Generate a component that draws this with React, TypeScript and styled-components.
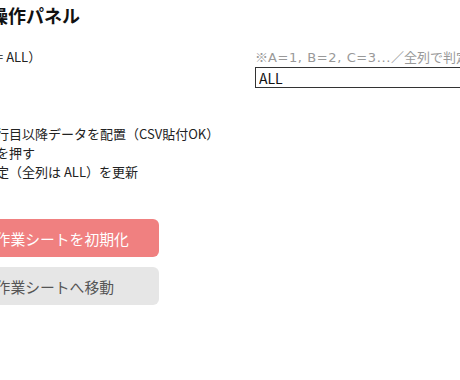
import React from 'react';
import styled, { createGlobalStyle } from 'styled-components';

const GlobalStyle = createGlobalStyle`
  html, body {
    margin: 0;
    padding: 0;
    background: #ffffff;
    overflow: hidden;
  }
  body {
    font-family: "Noto Sans CJK JP", "Noto Sans", sans-serif;
    color: #222222;
  }
`;

const steps = [
  '１．第２行目以降データを配置（CSV貼付OK）',
  '２．実行を押す',
  '３．列指定（全列は ALL）を更新',
];

const App = () => {
  return (
    <>
      <GlobalStyle />
      <Panel>
        <Title>操作パネル</Title>
        <FormRow>
          <Label>列（全列= ALL）</Label>
          <Field>
            <Hint>
              ※<Latin>A=1, B=2, C=3...</Latin>／全列で判定する場合は ALL
            </Hint>
            <TextInput defaultValue="ALL" />
          </Field>
        </FormRow>
        <StepList>
          {steps.map((s) => (
            <Step key={s}>{s}</Step>
          ))}
        </StepList>
        <ButtonGroup>
          <ActionButton $variant="danger">新規作業シートを初期化</ActionButton>
          <ActionButton $variant="neutral">既存作業シートへ移動</ActionButton>
        </ButtonGroup>
      </Panel>
    </>
  );
};

const Panel = styled.div`
  width: 640px;
  margin-left: -56px;
  display: flex;
  flex-direction: column;
`;

const Title = styled.h2`
  margin: 2px 0 0 46px;
  font-size: 18px;
  line-height: 26px;
  font-weight: 700;
  color: #111111;
`;

const FormRow = styled.div`
  display: grid;
  grid-template-columns: 311px 1fr;
  margin-top: 20px;
`;

const Label = styled.div`
  font-size: 13px;
  line-height: 18px;
`;

const Field = styled.div`
  display: flex;
  flex-direction: column;
`;

const Hint = styled.div`
  height: 18px;
  font-size: 13px;
  line-height: 18px;
  color: #999999;
  white-space: nowrap;
`;

const Latin = styled.span`
  font-family: "DejaVu Sans", sans-serif;
  line-height: 1;
  letter-spacing: 0.6px;
`;

const TextInput = styled.input`
  box-sizing: border-box;
  width: 320px;
  height: 21px;
  margin-top: 1px;
  padding: 0 3px;
  border: 1px solid #333333;
  border-radius: 0;
  font-family: inherit;
  font-size: 14px;
  color: #111111;
  outline: none;
`;

const StepList = styled.div`
  margin-top: 36px;
  display: flex;
  flex-direction: column;
`;

const Step = styled.div`
  font-size: 13px;
  line-height: 19px;
  white-space: nowrap;
`;

const ButtonGroup = styled.div`
  margin-top: 38px;
  display: flex;
  flex-direction: column;
  gap: 10px;
  width: 215px;
`;

const ActionButton = styled.button<{ $variant: 'danger' | 'neutral' }>`
  height: 38px;
  padding: 0 0 0 22px;
  border: none;
  border-radius: 6px;
  text-align: left;
  font-family: inherit;
  font-size: 14.8px;
  white-space: nowrap;
  background: ${(p) => (p.$variant === 'danger' ? '#f08080' : '#e6e6e6')};
  color: ${(p) => (p.$variant === 'danger' ? '#ffffff' : '#555555')};
  cursor: pointer;
`;

export default App;
